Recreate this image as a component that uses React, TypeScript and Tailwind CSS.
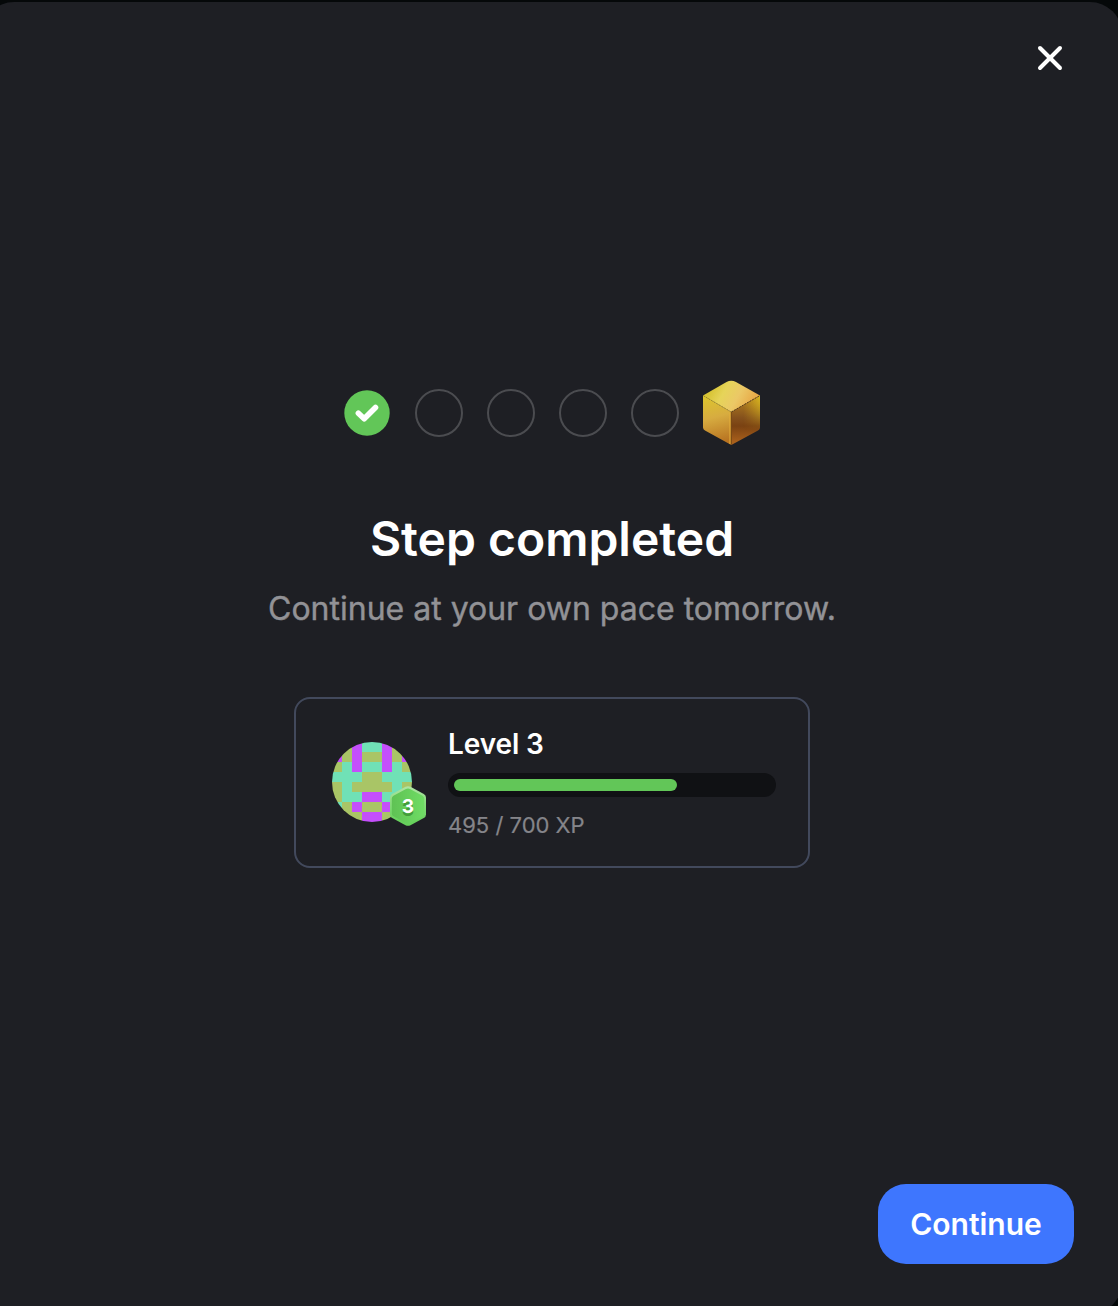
import { X } from "lucide-react";

const avatarRows = [
  "oopttpoo",
  "popoopop",
  "otpttpto",
  "tttoottt",
  "otooooto",
  "ottpptto",
  "topoopot",
  "oooppooo",
];

const avatarColors: Record<string, string> = {
  o: "#a9c566",
  p: "#c44ffb",
  t: "#70e1b6",
};

function CheckStep() {
  return (
    <svg width="48" height="48" viewBox="0 0 48 48" fill="none">
      <circle cx="24" cy="24" r="22.7" fill="#62c658" />
      <path
        d="M15.4 24.2 L21.2 29.7 L32.5 18.4"
        stroke="white"
        strokeWidth="5.6"
        strokeLinecap="round"
        strokeLinejoin="round"
      />
    </svg>
  );
}

function GoldCube() {
  return (
    <svg width="58" height="66" viewBox="0 0 58 66" fill="none">
      <defs>
        <linearGradient id="cubeTop" x1="10" y1="6" x2="46" y2="26" gradientUnits="userSpaceOnUse">
          <stop stopColor="#d8c435" />
          <stop offset="0.3" stopColor="#e6d459" />
          <stop offset="0.65" stopColor="#ebc866" />
          <stop offset="1" stopColor="#e8ac4a" />
        </linearGradient>
        <linearGradient id="cubeLeft" x1="8" y1="16" x2="20" y2="62" gradientUnits="userSpaceOnUse">
          <stop stopColor="#dcc42e" />
          <stop offset="0.45" stopColor="#d7ac40" />
          <stop offset="1" stopColor="#b87321" />
        </linearGradient>
        <linearGradient id="cubeRight" x1="42" y1="22" x2="42" y2="62" gradientUnits="userSpaceOnUse">
          <stop stopColor="#a9761f" />
          <stop offset="0.4" stopColor="#84501c" />
          <stop offset="0.6" stopColor="#7a4212" />
          <stop offset="1" stopColor="#a9601c" />
        </linearGradient>
        <linearGradient id="cubeShine" x1="40" y1="0" x2="57" y2="0" gradientUnits="userSpaceOnUse">
          <stop stopColor="#dcb51f" stopOpacity="0" />
          <stop offset="1" stopColor="#dcbd1f" stopOpacity="0.9" />
        </linearGradient>
        <linearGradient id="cubeFade" x1="0" y1="16" x2="0" y2="50" gradientUnits="userSpaceOnUse">
          <stop stopColor="white" />
          <stop offset="1" stopColor="black" />
        </linearGradient>
        <mask id="cubeMask">
          <rect width="58" height="66" fill="url(#cubeFade)" />
        </mask>
      </defs>
      <path d="M0 15.5 L28.3 32 V65 L2 50.5 Q0 49.5 0 47.5 Z" fill="url(#cubeLeft)" />
      <path d="M57 15.5 L28.3 32 V65 L55 50.5 Q57 49.5 57 47.5 Z" fill="url(#cubeRight)" />
      <path d="M57 15.5 L28.3 32 V65 L57 49 Z" fill="url(#cubeShine)" mask="url(#cubeMask)" />
      <path d="M0 15.5 L23.5 2 Q28.3 -0.3 33 2 L57 15.5 L28.3 32 Z" fill="url(#cubeTop)" />
      <path d="M0.5 15.8 L28.3 32" stroke="#98802a" strokeWidth="0.8" strokeDasharray="1.5 1.5" />
      <path d="M28.3 32 L56.5 15.8" stroke="#593a16" strokeWidth="1" strokeDasharray="2 1" />
      <path d="M27 32.5 V64" stroke="#e6b03a" strokeWidth="1" />
      <path d="M28.3 32 V64" stroke="#7a4a15" strokeWidth="1" />
    </svg>
  );
}

function Avatar() {
  return (
    <div className="relative mb-0.5 h-20 w-20">
      <svg width="80" height="80" viewBox="0 0 8 8" className="rounded-full" shapeRendering="crispEdges">
        {avatarRows.map((row, y) =>
          row.split("").map((cell, x) => (
            <rect key={`${x}-${y}`} x={x} y={y} width="1" height="1" fill={avatarColors[cell]} />
          ))
        )}
      </svg>
      <div className="absolute left-[58px] top-11 flex h-10 w-9 items-center justify-center pt-0.5">
        <svg width="36" height="40" viewBox="0 0 36 40" className="absolute inset-0">
          <defs>
            <linearGradient id="badgeFill" x1="0" y1="0" x2="1" y2="0">
              <stop stopColor="#5fc254" />
              <stop offset="1" stopColor="#6fdc64" />
            </linearGradient>
            <linearGradient id="badgeRim" x1="0" y1="0" x2="0" y2="1">
              <stop stopColor="#b0e4a5" />
              <stop offset="0.45" stopColor="#86dc7b" />
              <stop offset="0.9" stopColor="#66d15b" />
            </linearGradient>
          </defs>
          <path
            d="M15.5 0.8 Q18 -0.5 20.5 0.8 L33.8 7.9 Q36 9.2 36 11.5 V28.5 Q36 30.8 33.8 32.1 L20.5 39.2 Q18 40.5 15.5 39.2 L2.2 32.1 Q0 30.8 0 28.5 V11.5 Q0 9.2 2.2 7.9 Z"
            fill="url(#badgeRim)"
          />
          <path
            d="M16 3 Q18 2 20 3 L32.5 9.7 Q34.2 10.7 34.2 12.5 V27.5 Q34.2 29.4 32.5 30.3 L20 37.3 Q18 38.3 16 37.3 L3.5 30.3 Q1.8 29.4 1.8 27.5 V12.5 Q1.8 10.7 3.5 9.7 Z"
            fill="url(#badgeFill)"
          />
        </svg>
        <span className="relative text-[19px] font-bold leading-none text-white [text-shadow:0_3px_0_#439c3b]">3</span>
      </div>
    </div>
  );
}

function App() {
  return (
    <div className="h-[1306px] overflow-hidden bg-[#050809] font-['Inter',sans-serif]">
      <div className="-ml-[18px] flex h-[1306px] w-[1140px] flex-col pt-[2px]">
        <main className="flex h-[1312px] shrink-0 flex-col rounded-[32px] bg-[#1e1f24]">
          <div className="flex justify-end pr-12 pt-8">
            <button aria-label="Close" className="flex h-12 w-12 items-center justify-center text-white">
              <X size={40} strokeWidth={2.4} />
            </button>
          </div>

          <section className="flex flex-col items-center pt-[298px]">
            <div className="flex h-[66px] items-center gap-6">
              <CheckStep />
              {[2, 3, 4, 5].map((step) => (
                <div key={step} className="h-12 w-12 rounded-full border-2 border-[#4b4c50]" />
              ))}
              <GoldCube />
            </div>

            <h1 className="mt-[64px] text-[48px] font-semibold leading-[58px] text-white">Step completed</h1>
            <p className="mt-[21px] text-[32px] leading-10 text-[#929296] [-webkit-text-stroke:0.4px_#929296]">
              Continue at your own pace tomorrow.
            </p>

            <div className="mt-[68px] flex h-[171px] w-[516px] items-center gap-9 rounded-2xl border-2 border-[#42495c] pl-9">
              <Avatar />
              <div className="flex w-[328px] flex-col">
                <p className="text-[28px] font-semibold leading-[34px] tracking-[-0.1px] text-white">Level 3</p>
                <div className="mt-3 h-6 rounded-full bg-[#101114] p-1.5">
                  <div className="h-3 w-[223px] rounded-full bg-[#62c658]" />
                </div>
                <p className="mt-3.5 text-[22px] leading-7 text-[#85858a] [-webkit-text-stroke:0.2px_#85858a]">
                  495 / 700 XP
                </p>
              </div>
            </div>
          </section>

          <div className="mt-auto flex justify-end pb-[50px] pr-12">
            <button className="h-20 w-[196px] rounded-[28px] bg-[#3e76fe] text-[30px] font-semibold text-white">
              Continue
            </button>
          </div>
        </main>
      </div>
    </div>
  );
}

export default App;
